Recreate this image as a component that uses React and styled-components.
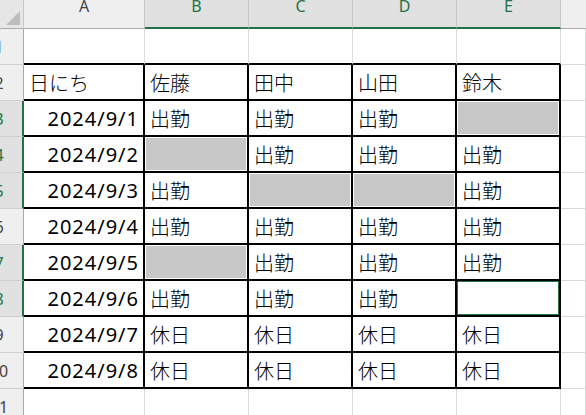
import React from 'react';
import styled, { createGlobalStyle, css } from 'styled-components';

const GREEN = '#217346';
const GRID = '#dadada';

const Global = createGlobalStyle`
  html, body { margin: 0; padding: 0; background: #fff; overflow: hidden; }
  body { width: 586px; height: 415px; }
`;

const Sheet = styled.div`
  display: grid;
  grid-template-columns: 24px 121px repeat(4, 104px) 1fr;
  grid-template-rows: 29px repeat(11, 36px);
  width: 586px;
  height: 415px;
  overflow: hidden;
  background: #fff;
`;

const Corner = styled.div`
  box-sizing: border-box;
  background: #e6e6e6;
  border-right: 1px solid #c6c6c6;
  border-bottom: 1px solid #ababab;
  display: flex;
  align-items: flex-end;
  justify-content: flex-end;
  padding: 0 3px 3px 0;
`;

const ColHeader = styled.div`
  box-sizing: border-box;
  background: ${p => (p.$selected ? '#e1e1e1' : '#efefef')};
  color: ${p => (p.$selected ? GREEN : '#444')};
  border-right: ${p => (p.$last ? 'none' : '1px solid #c6c6c6')};
  border-bottom: ${p => (p.$selected ? `2px solid ${GREEN}` : '1px solid #ababab')};
  font-family: 'Noto Sans', 'Liberation Sans', sans-serif;
  font-size: 16px;
  line-height: 16px;
  display: flex;
  justify-content: center;
  align-items: flex-start;
  overflow: hidden;
`;

const HeaderLetter = styled.span`
  margin-top: -2px;
`;

const RowHeader = styled.div`
  box-sizing: border-box;
  background: ${p => (p.$selected ? '#e1e1e1' : '#efefef')};
  color: ${p => (p.$selected ? GREEN : '#444')};
  border-right: ${p => (p.$selected ? `2px solid ${GREEN}` : '1px solid #ababab')};
  border-bottom: 1px solid #d0d0d0;
  font-family: 'Noto Sans', 'Liberation Sans', sans-serif;
  font-size: 16px;
  overflow: hidden;
  display: flex;
  align-items: center;
`;

const RowNum = styled.span`
  flex: 0 0 46px;
  margin-left: -24px;
  text-align: center;
`;

const Cell = styled.div`
  box-sizing: border-box;
  display: flex;
  align-items: center;
  overflow: hidden;
  white-space: nowrap;
  font-family: 'Noto Sans CJK JP', 'Noto Sans', sans-serif;
  font-size: 20px;
  font-weight: 300;
  color: #000;
  border-right: ${p => (p.$blackRight ? '2px solid #000' : `1px solid ${GRID}`)};
  border-bottom: ${p => (p.$blackBottom ? '2px solid #000' : `1px solid ${GRID}`)};
  justify-content: ${p => (p.$num ? 'flex-end' : 'flex-start')};
  padding: ${p => (p.$num ? '0 5px 0 0' : '0 0 0 5px')};
  ${p => p.$fill && css`
    background: #c8c8c8;
    box-shadow: inset 0 0 0 1px #fff;
  `}
  ${p => p.$active && css`
    box-shadow: inset 0 0 0 1px ${GREEN};
  `}
`;

const DateText = styled.span`
  font-family: 'Noto Sans', 'Liberation Sans', sans-serif;
  font-size: 20px;
  font-weight: 400;
  letter-spacing: 1px;
  margin-right: -1px;
`;

const cols = ['A', 'B', 'C', 'D', 'E'];
const selectedCols = new Set(['B', 'C', 'D', 'E']);
const selectedRows = new Set([3, 4, 5, 7, 8]);

// G = gray fill, S = selected empty cell
const data = {
  2: ['日にち', '佐藤', '田中', '山田', '鈴木'],
  3: ['2024/9/1', '出勤', '出勤', '出勤', 'G'],
  4: ['2024/9/2', 'G', '出勤', '出勤', '出勤'],
  5: ['2024/9/3', '出勤', 'G', 'G', '出勤'],
  6: ['2024/9/4', '出勤', '出勤', '出勤', '出勤'],
  7: ['2024/9/5', 'G', '出勤', '出勤', '出勤'],
  8: ['2024/9/6', '出勤', '出勤', '出勤', 'S'],
  9: ['2024/9/7', '休日', '休日', '休日', '休日'],
  10: ['2024/9/8', '休日', '休日', '休日', '休日'],
};

function SelectAllTriangle() {
  return (
    <svg width="14" height="14" viewBox="0 0 14 14">
      <polygon points="14,0 14,14 0,14" fill="#bdbdbd" />
    </svg>
  );
}

export default function App() {
  const rows = Array.from({ length: 11 }, (_, i) => i + 1);
  return (
    <>
      <Global />
      <Sheet>
        <Corner>
          <SelectAllTriangle />
        </Corner>
        {cols.map(c => (
          <ColHeader key={c} $selected={selectedCols.has(c)}>
            <HeaderLetter>{c}</HeaderLetter>
          </ColHeader>
        ))}
        <ColHeader $last />
        {rows.map(r => {
          const inTable = r >= 2 && r <= 10;
          const vals = data[r] || ['', '', '', '', ''];
          return (
            <React.Fragment key={r}>
              <RowHeader $selected={selectedRows.has(r)}>
                <RowNum>{r}</RowNum>
              </RowHeader>
              {cols.map((c, ci) => {
                const v = vals[ci];
                const isNum = ci === 0 && /^\d/.test(v);
                return (
                  <Cell
                    key={c}
                    $blackRight={inTable}
                    $blackBottom={r >= 1 && r <= 10}
                    $num={isNum}
                    $fill={v === 'G'}
                    $active={v === 'S'}
                  >
                    {v === 'G' || v === 'S' ? null : isNum ? <DateText>{v}</DateText> : v}
                  </Cell>
                );
              })}
              <Cell />
            </React.Fragment>
          );
        })}
      </Sheet>
    </>
  );
}
